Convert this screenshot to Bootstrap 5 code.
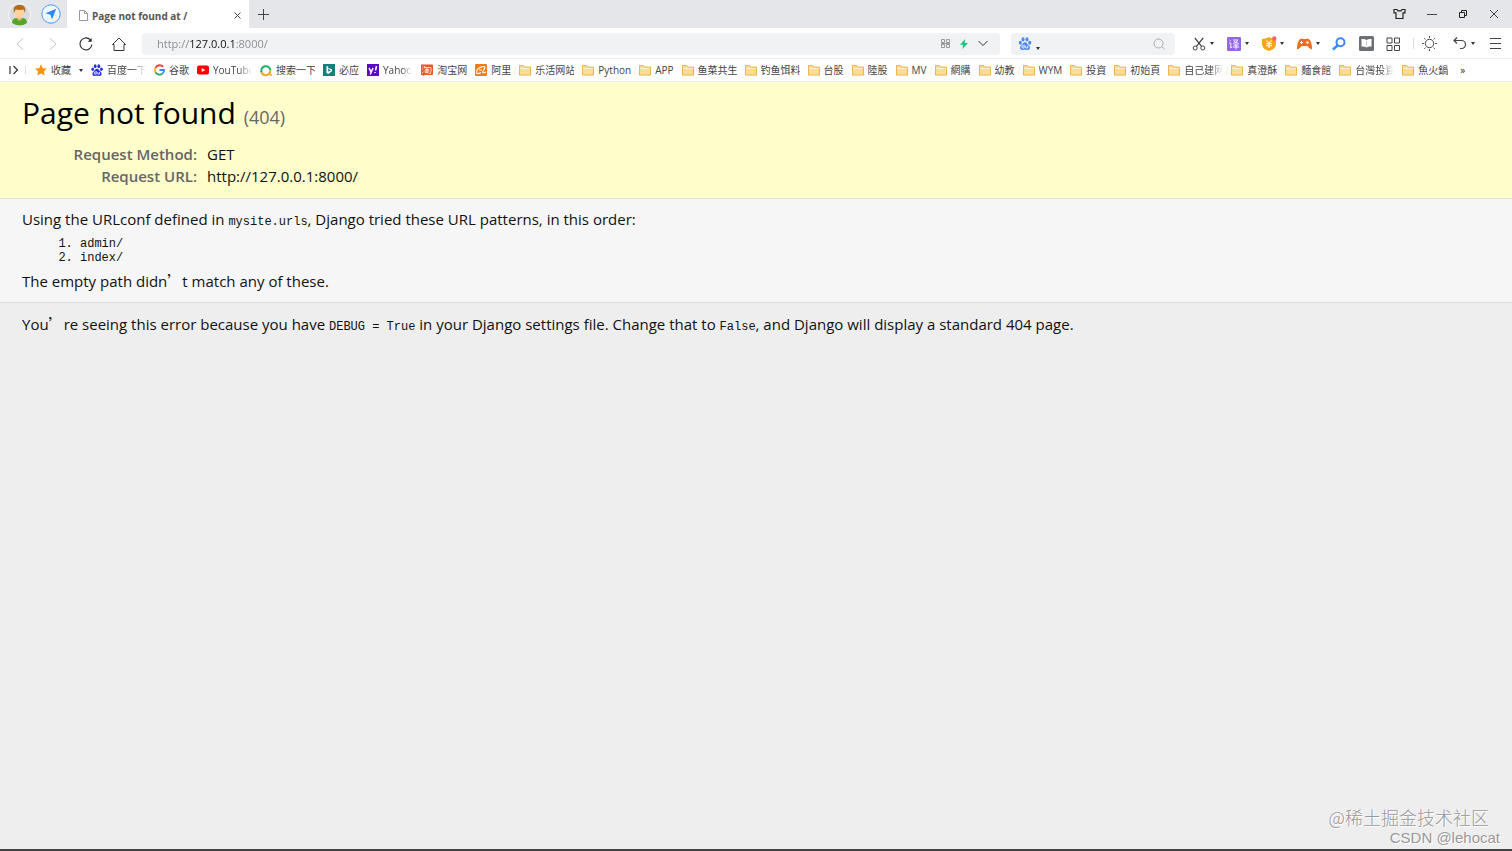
<!DOCTYPE html>
<html lang="zh-CN">
<head>
<meta charset="utf-8">
<meta name="viewport" content="width=device-width, initial-scale=1">
<title>Page not found at /</title>
<link href="https://cdn.jsdelivr.net/npm/bootstrap@5.3.0/dist/css/bootstrap.min.css" rel="stylesheet">
<script src="https://cdn.jsdelivr.net/npm/bootstrap@5.3.0/dist/js/bootstrap.bundle.min.js"></script>
<style>
body{font-family:"Open Sans","Noto Sans CJK SC",sans-serif;font-size:15px;line-height:20px;color:#111;background:#eee}
svg{display:block;flex:none;fill:none;stroke:#444;stroke-width:1;overflow:visible}
button{background:none;border:0;padding:0;color:#333}
.tabstrip{background:#e4e6ea;height:28px}
.profile{width:67px;padding-left:8px;gap:10px}
.page-tab{width:182px;background:#fff;padding:3px 8px 0 12px;font-size:10px;font-weight:700;color:#555;gap:4px}
.new-tab{width:28px}
.window-controls{gap:19px;padding-right:12px}
.toolbar{height:31px;background:#fff;border-bottom:1px solid #edf0f3;padding:1px 10px 0 3px}
.nav-btn{width:33px;height:30px}
.field{background:#f1f2f4;border-radius:4px;height:22px}
.field input{border:0;background:none;outline:0;min-width:0;padding:0;font-size:11px;line-height:20px}
.address{margin-left:7px;padding:0 12px 0 15px;gap:10px}
.address input.url{color:transparent;background:linear-gradient(to right,#858a90 33px,#111 33px,#111 79px,#858a90 79px);-webkit-background-clip:text;background-clip:text;caret-color:#111}
.search{width:164px;margin-left:11px;padding:0 10px 0 7px;gap:2px}
.tools{margin-left:17px}
.tool-wide{width:35px;gap:4px}
.tool{width:27px}
.caret{width:0;height:0;border:2px solid transparent;border-top:3px solid #333;border-bottom:0}
.divider{width:1px;height:11px;background:#ddd}
.bookmarks{height:23px;background:#fff;border-bottom:1px solid #edf0f3;padding-left:9px;gap:8px;font-size:10px;line-height:16px;white-space:nowrap;overflow:hidden}
.bookmarks a{display:flex;align-items:center;gap:4px;color:#444;text-decoration:none;flex:none}
.bookmarks a span{max-width:39px;overflow:hidden}
.bookmarks a.cut span{-webkit-mask-image:linear-gradient(to right,#000 65%,transparent);mask-image:linear-gradient(to right,#000 65%,transparent)}
.bookmarks a.short span{max-width:30px}
.summary{background:#ffc;border-bottom:1px solid #ddd;padding:12px 22px 11px}
.summary h1{font-size:30px;line-height:38px;font-weight:400;margin:0 0 7px;color:#000}
.summary h1 small{font-size:18px;color:#666}
.meta{margin:0;line-height:22px}
.meta th{width:185px;text-align:right;padding:0 10px 0 0;color:#666;font-weight:600}
.meta td{padding:0}
.info{background:#f6f6f6;border-bottom:1px solid #ddd;padding:10px 22px 11px}
.info p,.explanation p{margin:0}
.info ol{font:12px/14px "Liberation Mono",monospace;margin:8px 0 6px;padding-left:58px}
code{font:12px/14px "Liberation Mono",monospace;color:#111}
.wide-mark{font-family:"Noto Sans CJK SC",sans-serif}
.explanation{padding:11px 22px}
.watermark{font-family:"Noto Sans CJK SC",sans-serif;color:#999;text-shadow:1px 1px 0 #fff;font-weight:300}
.watermark .site{font-size:18px;line-height:20px;padding-right:23px}
.watermark .author{font:15px/22px "Liberation Sans",sans-serif;padding-right:12px}
.taskbar-edge{height:2px;background:#444}
</style>
</head>
<body class="d-flex flex-column min-vh-100">
<svg width="0" height="0" class="position-absolute" aria-hidden="true">
<symbol id="folder" viewBox="0 0 12 12"><path d="M.5 1.5h4l1.300 1.600h5.700v8H.5z" fill="#ffdc96" stroke="#f0b54a"/><path d="M1 4.500h10" stroke="#fff0c8"/></symbol>
<symbol id="paw" viewBox="0 0 12 12"><g stroke="none"><ellipse cx="1.700" cy="5.300" rx="1.400" ry="1.800"/><ellipse cx="4.200" cy="2.200" rx="1.400" ry="2"/><ellipse cx="7.800" cy="2.200" rx="1.400" ry="2"/><ellipse cx="10.400" cy="5.300" rx="1.400" ry="1.800"/><path d="M6 4.800c1.700 0 2 1.600 3.300 2.700 2.400 2 1.200 4.700-1 4.400-1.500-.3-3-.3-4.600 0-2.200.3-3.400-2.400-1-4.400C4 6.400 4.300 4.800 6 4.800z"/></g><path d="M4.800 8h-.6a1 1 0 0 0 0 2.200h1V7M6.700 8v1.700q0 .5.600.5h1.200V8" stroke="#fff" stroke-width=".8" fill="none"/></symbol>
</svg>

<header>
<div class="tabstrip d-flex">
  <div class="profile d-flex align-items-center">
    <button aria-label="账户"><svg width="23" height="23" viewBox="0 0 23 23"><circle cx="11.500" cy="11.500" r="11" fill="#d9dcdc" stroke="#f7f7f7"/><path d="M4 20q0-5 5-5h5q5 0 5 5-7 5-15 0z" fill="#55a829" stroke="none"/><path d="M9 13h5v3l-2.500 2L9 16z" fill="#e9b183" stroke="none"/><ellipse cx="11.500" cy="10" rx="5" ry="5.500" fill="#ffd2a0" stroke="none"/><path d="M6 10C4.500 3 8 2 11.500 2s7 1 5.500 8l-1.500-3.500q-4 .8-8 0z" fill="#b16b1d" stroke="none"/></svg></button>
    <button aria-label="导航"><svg width="20" height="20" viewBox="0 0 20 20"><circle cx="10" cy="10" r="9.200" fill="#eef6ff" stroke="#4b9bf8"/><path d="M15.200 4.800 11 15.500l-1.500-4.800-5-1.400z" fill="#2e86f7" stroke="none"/></svg></button>
  </div>
  <div class="page-tab d-flex align-items-center">
    <svg width="9" height="11" viewBox="0 0 9 11"><path d="M.5.500h5l3 3v7h-8zM5.500.500v3h3" stroke="#999"/></svg>
    <span class="flex-grow-1">Page not found at /</span>
    <button aria-label="关闭标签页"><svg width="7" height="7" viewBox="0 0 7 7"><path d="m.5.500 6 6m0-6-6 6"/></svg></button>
  </div>
  <button class="new-tab d-flex align-items-center justify-content-center" aria-label="新标签页"><svg width="11" height="11" viewBox="0 0 11 11"><path d="M5.500 0v11M0 5.500h11"/></svg></button>
  <div class="window-controls d-flex align-items-center ms-auto">
    <button aria-label="皮肤"><svg width="13" height="12" viewBox="0 0 13 12"><path d="M1 1.500h3l1 1.300h3l1-1.300h3v3.300h-2v5.700H3V4.800H1z" stroke="#222" stroke-width="1.200"/></svg></button>
    <button aria-label="最小化"><svg width="13" height="10" viewBox="0 0 13 10"><path d="M2 5.500h10"/></svg></button>
    <button aria-label="还原"><svg width="12" height="10" viewBox="0 0 12 10"><path d="M2.500 3.500h5v5h-5zM4.500 3.500v-2h5v5h-2" stroke="#222"/></svg></button>
    <button aria-label="关闭"><svg width="12" height="10" viewBox="0 0 12 10"><path d="m2 1 8 8m0-8-8 8"/></svg></button>
  </div>
</div>

<div class="toolbar d-flex align-items-center">
  <button class="nav-btn d-flex align-items-center justify-content-center" aria-label="后退"><svg width="8" height="12" viewBox="0 0 8 12"><path d="M7 .5 1 6l6 5.500" stroke="#c4c6c8"/></svg></button>
  <button class="nav-btn d-flex align-items-center justify-content-center" aria-label="前进"><svg width="8" height="12" viewBox="0 0 8 12"><path d="M1 .5 7 6l-6 5.500" stroke="#c4c6c8"/></svg></button>
  <button class="nav-btn d-flex align-items-center justify-content-center" aria-label="刷新"><svg width="14" height="14" viewBox="0 0 14 14"><path d="M12.900 7.500A6 6 0 1 1 11.200 2.700" stroke="#222" stroke-width="1.100"/><path d="M12.600 1v3.800H8.800z" fill="#222" stroke="none"/></svg></button>
  <button class="nav-btn d-flex align-items-center justify-content-center" aria-label="主页"><svg width="14" height="14" viewBox="0 0 14 14"><path d="M.5 7.500 7 1l6.500 6.500H12v6H2v-6z" stroke="#333"/></svg></button>
  <div class="field address d-flex align-items-center flex-grow-1">
    <input class="url flex-grow-1" type="text" aria-label="网址" value="http://127.0.0.1:8000/">
    <button aria-label="二维码"><svg width="9" height="9" viewBox="0 0 9 9"><path d="M.5.500h3v3h-3zM5.500.500h3v3h-3zM.5 5.500h3v3h-3zM5.500 5.500h3v3h-3zM0 4.500h9" stroke="#999"/></svg></button>
    <button aria-label="极速模式"><svg width="8" height="10" viewBox="0 0 8 10"><path d="M5 0 0 5.800h3L2.500 10 8 4H4.800z" fill="#1fc585" stroke="none"/></svg></button>
    <button aria-label="历史网址"><svg width="10" height="7" viewBox="0 0 10 7"><path d="m.5 1 4.500 4.500L9.500 1" stroke="#333"/></svg></button>
  </div>
  <div class="field search d-flex align-items-center">
    <button class="d-flex align-items-end" aria-label="搜索引擎"><svg width="14" height="13" style="fill:#4c86ef"><use href="#paw"/></svg><i class="caret ms-1"></i></button>
    <input class="flex-grow-1" type="search" aria-label="搜索">
    <button aria-label="开始搜索"><svg width="12" height="12" viewBox="0 0 12 12"><circle cx="5.500" cy="5.500" r="4.500" stroke="#aaa"/><path d="m9 9 2.500 2" stroke="#aaa"/></svg></button>
  </div>
  <div class="tools d-flex align-items-center">
    <button class="tool-wide d-flex align-items-center" aria-label="截图"><svg width="14" height="14" viewBox="0 0 14 14"><circle cx="3.200" cy="11" r="2"/><circle cx="10.800" cy="11" r="2"/><path d="M2.800 1 9.600 9.300M11.200 1 4.400 9.300" stroke-width="1.200"/></svg><i class="caret"></i></button>
    <button class="tool-wide d-flex align-items-center" aria-label="翻译"><svg width="14" height="14" viewBox="0 0 14 14"><rect width="14" height="14" rx="1" fill="#9366e8" stroke="none"/><path d="m2.500 3 1.300 1M2 6h1.800v5l1.300-1M6 3h5q-1.500 2.800-5 3.500M7 4q1.500 2 5 2.500M6.500 8h5M5.800 10h6.400M9 6.500V12.500" stroke="#fff" stroke-width=".9"/></svg><i class="caret"></i></button>
    <button class="tool-wide d-flex align-items-center" aria-label="购物"><svg width="14" height="14" viewBox="0 0 14 14"><path d="M7 0q3 2 7 2v5q0 5-7 7-7-2-7-7V2q4 0 7-2z" fill="#f8a51b" stroke="none"/><path d="m4.500 3.500 2.500 3 2.500-3M4 6.800h6M4 8.800h6M7 6.500v4.500" stroke="#fff" stroke-width="1.100"/><circle cx="12.300" cy="1.500" r="2.200" fill="#f56565" stroke="none"/></svg><i class="caret"></i></button>
    <button class="tool-wide d-flex align-items-center" aria-label="游戏"><svg width="15" height="14" viewBox="0 0 15 14"><path d="M3 2q2-1.200 3 0h3q1-1.200 3 0 3 3 3 10-2 1-4.500-3h-6Q2 13 0 12 0 5 3 2z" fill="#f36b22" stroke="none"/><path d="M4.500 4v3M3 5.500h3" stroke="#fff"/><circle cx="10.500" cy="5.500" r="1.200" fill="#fff" stroke="none"/></svg><i class="caret"></i></button>
    <button class="tool" aria-label="查找"><svg width="14" height="14" viewBox="0 0 14 14"><circle cx="8.500" cy="5.200" r="4" stroke="#3d87ee" stroke-width="2"/><path d="m5.500 8.500-4.500 4" stroke="#3d87ee" stroke-width="2.400"/></svg></button>
    <button class="tool" aria-label="阅读"><svg width="15" height="15" viewBox="0 0 15 15"><rect width="15" height="15" rx="1.500" fill="#6c7072" stroke="none"/><path d="M2.500 3q3-.5 5 1 2-1.500 5-1v7.500q-3-.5-5 1-2-1.500-5-1z" fill="#fff" stroke="none"/><path d="M7.500 4.500v6" stroke="#ccc"/></svg></button>
    <button class="tool" aria-label="扩展"><svg width="14" height="14" viewBox="0 0 14 14"><path d="M1 1h5v5H1zM8.500 1h5v5h-5zM1 8.500h5v5H1zM8.500 8.500h5v5h-5z"/></svg></button>
    <i class="divider me-2"></i>
    <button class="me-3" aria-label="夜间模式"><svg width="15" height="15" viewBox="0 0 15 15"><circle cx="7.500" cy="7.500" r="4.200"/><path d="M7.500 0v1.800M7.500 13.200V15M0 7.500h1.800M13.200 7.500H15M2.200 2.200l1.200 1.200M11.600 11.600l1.200 1.200M2.200 12.800l1.200-1.200M11.600 3.400l1.200-1.200"/></svg></button>
    <button class="tool-wide d-flex align-items-center" aria-label="撤销"><svg width="14" height="13" viewBox="0 0 14 13"><path d="M1 3.500h7.500a4 4 0 0 1 0 8H7M4 .5l-3 3 3 3" stroke-width="1.200"/></svg><i class="caret"></i></button>
    <button aria-label="菜单"><svg width="14" height="12" viewBox="0 0 14 12"><path d="M2 .5h11M2 5.500h11M2 10.500h11"/></svg></button>
  </div>
</div>

<nav class="bookmarks d-flex align-items-center" aria-label="收藏栏">
  <button class="d-flex" aria-label="侧栏"><svg width="18" height="10" viewBox="0 0 18 10"><path d="M1 1v8M4.500 1l4 4-4 4" stroke="#333" stroke-width="1.200"/><path d="M16.500 1v8" stroke="#ddd"/></svg></button>
  <a href="#"><svg width="12" height="12" viewBox="0 0 12 12"><path d="m6 .3 1.700 3.900 4.300.4L8.800 7.400l1 4.200L6 9.400l-3.800 2.200 1-4.200L0 4.600l4.300-.4z" fill="#f69316" stroke="none"/></svg><span>收藏</span><i class="caret ms-1"></i></a>
  <a href="#" class="cut"><svg width="12" height="12" style="fill:#2c32e0"><use href="#paw"/></svg><span>百度一下</span></a>
  <a href="#"><svg width="11" height="12" viewBox="0 0 12 12"><path d="M10 2.600A5 5 0 0 0 1.600 3.700" stroke="#ea4335" stroke-width="2"/><path d="M1.600 3.700a5 5 0 0 0 0 4.600" stroke="#fbbc05" stroke-width="2"/><path d="M1.600 8.300A5 5 0 0 0 9.300 9.800" stroke="#34a853" stroke-width="2"/><path d="M9.300 9.800Q11 8.500 11 6H6" stroke="#4285f4" stroke-width="2"/></svg><span>谷歌</span></a>
  <a href="#" class="cut"><svg width="12" height="12" viewBox="0 0 12 12"><rect y="1.500" width="12" height="9" rx="2" fill="#f00" stroke="none"/><path d="M4.700 4v4L8.300 6z" fill="#fff" stroke="none"/></svg><span>YouTube</span></a>
  <a href="#"><svg width="12" height="12" viewBox="0 0 12 12"><path d="M1.700 8.500a4.500 4.500 0 1 1 8.600-2" stroke="#22ad6c" stroke-width="2"/><path d="M10.300 6.500A4.500 4.500 0 0 1 1.700 8.500" stroke="#f5a623" stroke-width="2"/><circle cx="11" cy="11" r="1" fill="#f5a623" stroke="none"/></svg><span>搜索一下</span></a>
  <a href="#"><svg width="12" height="12" viewBox="0 0 12 12"><path d="M0 0h12v12H0z" fill="#12807c" stroke="none"/><path d="m3.500 2 1.700.6v5.200L8 6.300 5.800 5.200 5.300 4 9 5.300v2L5.200 10 3.500 9z" fill="#fff" stroke="none"/></svg><span>必应</span></a>
  <a href="#" class="cut short"><svg width="12" height="12" viewBox="0 0 12 12"><path d="M0 0h12v12H0z" fill="#5b0bc4" stroke="none"/><path d="m2 4 2 4m2-4-2.800 6.500M9.500 2l-1 4.500M8 8v1" stroke="#fff" stroke-width="1.500"/></svg><span>Yahoo</span></a>
  <a href="#"><svg width="13" height="12" viewBox="0 0 13 12"><path d="M1 .5h11q1 0 1 1V10q0 1-1 1H5l-2 1-.5-1H1z" fill="#e9562b" stroke="none"/><path d="m2 2.500 1 .8M1.800 5l1 .8M2 9.500l1.300-2M5 2 4 4.500M5 3.500h6q.3 4-.5 6H9M5 5.500h4M4.500 7h5M7 4v4.500M5.200 7.500v1.200h3.500" stroke="#fff" stroke-width=".8"/></svg><span>淘宝网</span></a>
  <a href="#"><svg width="12" height="12" viewBox="0 0 12 12"><rect width="12" height="12" rx="1" fill="#f57b12" stroke="none"/><path d="M1.500 8Q2 3.500 8.500 2.500 11 2.500 9 5.500 6.500 9 9 8.800L11 8M1.500 8q0 3 4.500.5M4 6h3" stroke="#fff" stroke-width="1.100"/></svg><span>阿里</span></a>
  <a href="#"><svg width="12" height="12"><use href="#folder"/></svg><span>乐活网站</span></a>
  <a href="#"><svg width="12" height="12"><use href="#folder"/></svg><span>Python</span></a>
  <a href="#"><svg width="12" height="12"><use href="#folder"/></svg><span>APP</span></a>
  <a href="#"><svg width="12" height="12"><use href="#folder"/></svg><span>鱼菜共生</span></a>
  <a href="#"><svg width="12" height="12"><use href="#folder"/></svg><span>钓鱼饵料</span></a>
  <a href="#"><svg width="12" height="12"><use href="#folder"/></svg><span>台股</span></a>
  <a href="#"><svg width="12" height="12"><use href="#folder"/></svg><span>陸股</span></a>
  <a href="#"><svg width="12" height="12"><use href="#folder"/></svg><span>MV</span></a>
  <a href="#"><svg width="12" height="12"><use href="#folder"/></svg><span>網購</span></a>
  <a href="#"><svg width="12" height="12"><use href="#folder"/></svg><span>幼教</span></a>
  <a href="#"><svg width="12" height="12"><use href="#folder"/></svg><span>WYM</span></a>
  <a href="#"><svg width="12" height="12"><use href="#folder"/></svg><span>投資</span></a>
  <a href="#"><svg width="12" height="12"><use href="#folder"/></svg><span>初始頁</span></a>
  <a href="#" class="cut"><svg width="12" height="12"><use href="#folder"/></svg><span>自己建网</span></a>
  <a href="#"><svg width="12" height="12"><use href="#folder"/></svg><span>真澄酥</span></a>
  <a href="#"><svg width="12" height="12"><use href="#folder"/></svg><span>麵食館</span></a>
  <a href="#" class="cut"><svg width="12" height="12"><use href="#folder"/></svg><span>台灣投資</span></a>
  <a href="#"><svg width="12" height="12"><use href="#folder"/></svg><span>魚火鍋</span></a>
  <button class="ms-1" aria-label="更多收藏">»</button>
</nav>
</header>

<main>
<section class="summary">
  <h1>Page not found <small>(404)</small></h1>
  <table class="meta">
    <tr><th scope="row">Request Method:</th><td>GET</td></tr>
    <tr><th scope="row">Request URL:</th><td>http://127.0.0.1:8000/</td></tr>
  </table>
</section>
<section class="info">
  <p>Using the URLconf defined in <code>mysite.urls</code>, Django tried these URL patterns, in this order:</p>
  <ol><li>admin/</li><li>index/</li></ol>
  <p>The empty path didn<span class="wide-mark">’</span>t match any of these.</p>
</section>
<section class="explanation">
  <p>You<span class="wide-mark">’</span>re seeing this error because you have <code>DEBUG = True</code> in your Django settings file. Change that to <code>False</code>, and Django will display a standard 404 page.</p>
</section>
</main>
<footer class="mt-auto text-end">
  <div class="watermark"><div class="site">@稀土掘金技术社区</div><div class="author">CSDN @lehocat</div></div>
  <div class="taskbar-edge"></div>
</footer>
</body>
</html>
